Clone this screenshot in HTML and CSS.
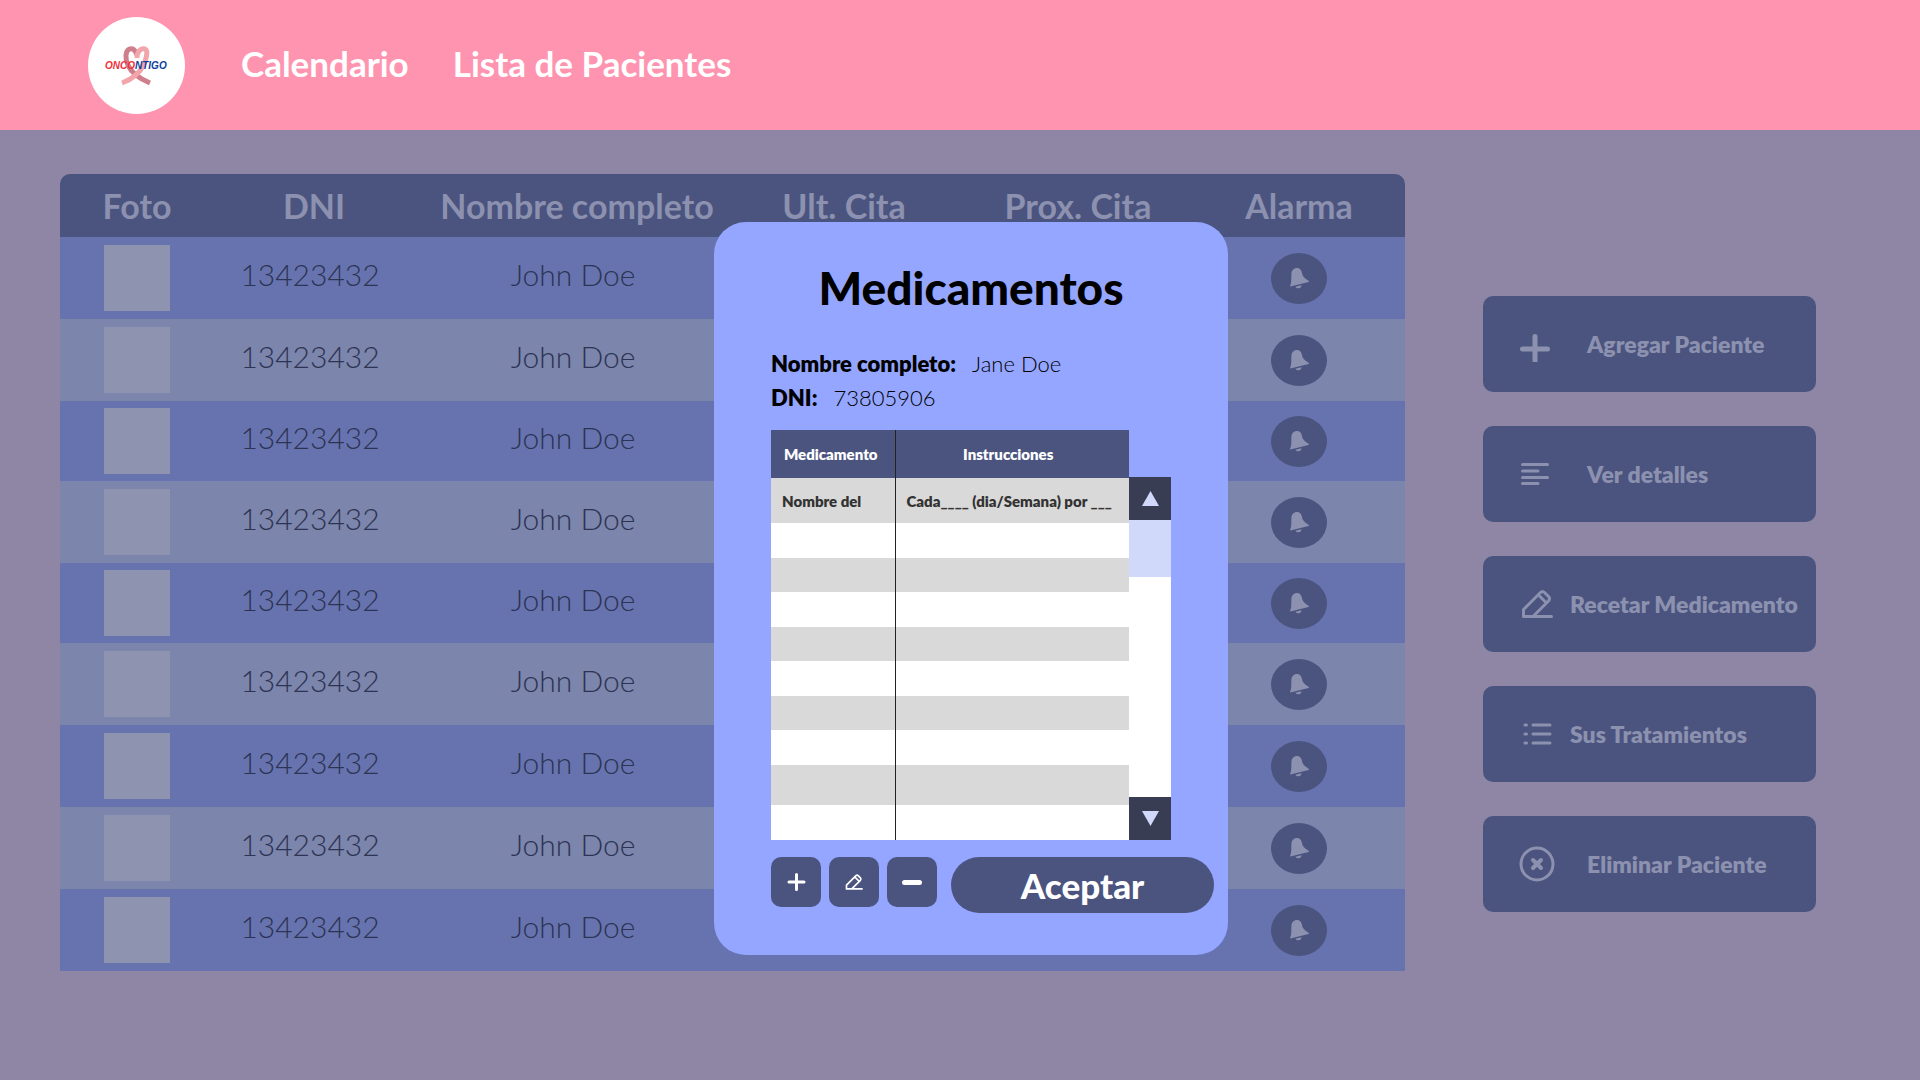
FILE: index.html
```html
<!DOCTYPE html>
<html lang="es">
<head>
<meta charset="utf-8">
<meta name="viewport" content="width=device-width, initial-scale=1">
<title>Oncontigo - Lista de Pacientes</title>
<link rel="stylesheet" href="styles.css">
</head>
<body>
<svg class="sprite" aria-hidden="true">
  <symbol id="bell" viewBox="0 0 56 51">
    <path fill="currentColor" d="M19 33C21 29 20 24 20.5 20C21 16.5 23.5 15 26 15C29 15 30.5 17 31 20C31.5 24 35 26 38 28L37.6 29L19.4 33.5Z"/>
    <path fill="currentColor" d="M24.5 33.7L30.5 32.3C30.5 34 29 35.3 27.5 35.3C26 35.3 25 34.8 24.5 33.7Z"/>
  </symbol>
  <symbol id="pencil" viewBox="0 0 36 36">
    <path fill="none" stroke="currentColor" stroke-width="3" stroke-linecap="round" stroke-linejoin="round" d="M4.500 30.500H32.500M4.500 30.500V23.500L21.500 6.500Q23.500 4.500 25.500 6.500L29.500 10.500Q31.500 12.500 29.500 15L14.500 30M19.500 9L27 16.500"/>
  </symbol>
</svg>

<header class="topbar">
  <a class="logo" href="#" aria-label="Oncontigo">
    <svg viewBox="0 0 97 97" width="97" height="97">
      <g fill="none" stroke-width="5">
        <path stroke="#cf7f8b" d="M49 38C47 32 44 31 41.500 32C37 34 37 42 40 48C43 55 50 61 62 66"/>
        <path stroke="#f2a5ab" d="M49 41C49 34 53 31 57 32C60 33 59 40 56 47C52 56 45 62 34 66"/>
      </g>
      <text class="logo-text" x="17" y="52"><tspan fill="#f0323a">ONCO</tspan><tspan fill="#0d3f9c">NTIGO</tspan></text>
    </svg>
  </a>
  <nav class="nav">
    <a href="#">Calendario</a>
    <a href="#">Lista de Pacientes</a>
  </nav>
</header>

<main class="page">
  <table class="patients">
    <colgroup><col class="c-photo"><col class="c-dni"><col class="c-name"><col class="c-last"><col class="c-next"><col class="c-alarm"></colgroup>
    <thead>
      <tr><th>Foto</th><th>DNI</th><th>Nombre completo</th><th>Ult. Cita</th><th>Prox. Cita</th><th>Alarma</th></tr>
    </thead>
    <tbody>
      <tr><td><span class="photo"></span></td><td class="txt">13423432</td><td class="txt">John Doe</td><td></td><td></td><td><button class="alarm" aria-label="Alarma"><svg><use href="#bell"/></svg></button></td></tr>
      <tr><td><span class="photo"></span></td><td class="txt">13423432</td><td class="txt">John Doe</td><td></td><td></td><td><button class="alarm" aria-label="Alarma"><svg><use href="#bell"/></svg></button></td></tr>
      <tr class="short"><td><span class="photo"></span></td><td class="txt">13423432</td><td class="txt">John Doe</td><td></td><td></td><td><button class="alarm" aria-label="Alarma"><svg><use href="#bell"/></svg></button></td></tr>
      <tr><td><span class="photo"></span></td><td class="txt">13423432</td><td class="txt">John Doe</td><td></td><td></td><td><button class="alarm" aria-label="Alarma"><svg><use href="#bell"/></svg></button></td></tr>
      <tr class="short"><td><span class="photo"></span></td><td class="txt">13423432</td><td class="txt">John Doe</td><td></td><td></td><td><button class="alarm" aria-label="Alarma"><svg><use href="#bell"/></svg></button></td></tr>
      <tr><td><span class="photo"></span></td><td class="txt">13423432</td><td class="txt">John Doe</td><td></td><td></td><td><button class="alarm" aria-label="Alarma"><svg><use href="#bell"/></svg></button></td></tr>
      <tr><td><span class="photo"></span></td><td class="txt">13423432</td><td class="txt">John Doe</td><td></td><td></td><td><button class="alarm" aria-label="Alarma"><svg><use href="#bell"/></svg></button></td></tr>
      <tr><td><span class="photo"></span></td><td class="txt">13423432</td><td class="txt">John Doe</td><td></td><td></td><td><button class="alarm" aria-label="Alarma"><svg><use href="#bell"/></svg></button></td></tr>
      <tr><td><span class="photo"></span></td><td class="txt">13423432</td><td class="txt">John Doe</td><td></td><td></td><td><button class="alarm" aria-label="Alarma"><svg><use href="#bell"/></svg></button></td></tr>
    </tbody>
  </table>

  <aside class="actions">
    <button class="action wide">
      <svg viewBox="0 0 36 36" fill="none" stroke="currentColor" stroke-width="5" stroke-linecap="round"><path d="M3.500 23H28.500M16 10.500V35.500"/></svg>
      Agregar Paciente
    </button>
    <button class="action wide">
      <svg viewBox="0 0 36 36" fill="none" stroke="currentColor" stroke-width="3" stroke-linecap="round"><path d="M3.500 8.500H28.500M3.500 15H19M3.500 21.500H28.500M3.500 27.500H19"/></svg>
      Ver detalles
    </button>
    <button class="action">
      <svg><use href="#pencil"/></svg>
      Recetar Medicamento
    </button>
    <button class="action">
      <svg viewBox="0 0 36 36" fill="none" stroke="currentColor" stroke-width="3" stroke-linecap="round"><path d="M6 9H7.500M14 9H31M6 18H7.500M14 18H31M6 27H7.500M14 27H31"/></svg>
      Sus Tratamientos
    </button>
    <button class="action wide">
      <svg viewBox="0 0 36 36" fill="none" stroke="currentColor" stroke-width="3" stroke-linecap="round"><circle cx="18" cy="18" r="16"/><path stroke-width="4" d="M14 14L22 22M22 14L14 22"/></svg>
      Eliminar Paciente
    </button>
  </aside>

  <section class="modal" role="dialog" aria-labelledby="modal-title">
    <h1 id="modal-title">Medicamentos</h1>
    <dl class="info">
      <div><dt>Nombre completo:</dt><dd>Jane Doe</dd></div>
      <div><dt>DNI:</dt><dd>73805906</dd></div>
    </dl>
    <div class="meds-box">
      <table class="meds">
        <thead><tr><th>Medicamento</th><th>Instrucciones</th></tr></thead>
        <tbody>
          <tr class="first"><td>Nombre del</td><td>Cada____ (dia/Semana) por ___</td></tr>
          <tr><td></td><td></td></tr>
          <tr><td></td><td></td></tr>
          <tr><td></td><td></td></tr>
          <tr><td></td><td></td></tr>
          <tr><td></td><td></td></tr>
          <tr><td></td><td></td></tr>
          <tr><td></td><td></td></tr>
          <tr class="tall"><td></td><td></td></tr>
          <tr><td></td><td></td></tr>
        </tbody>
      </table>
      <div class="scroll">
        <button aria-label="Subir"><svg viewBox="0 0 17 15"><path fill="currentColor" d="M8.500 0L17 15H0Z"/></svg></button>
        <div class="track"><div class="thumb"></div></div>
        <button aria-label="Bajar"><svg viewBox="0 0 17 15"><path fill="currentColor" d="M8.500 15L17 0H0Z"/></svg></button>
      </div>
    </div>
    <div class="tools">
      <button class="tool" aria-label="Agregar"><svg viewBox="0 0 24 24" stroke="#fff" stroke-width="3" stroke-linecap="round"><path d="M5 12H20M12.500 4.500V19.500"/></svg></button>
      <button class="tool" aria-label="Editar"><svg class="small"><use href="#pencil"/></svg></button>
      <button class="tool" aria-label="Quitar"><svg viewBox="0 0 24 24" stroke="#fff" stroke-width="5" stroke-linecap="round"><path d="M4.500 12.500H19.500"/></svg></button>
      <button class="accept">Aceptar</button>
    </div>
  </section>
</main>
</body>
</html>
```
FILE: styles.css
```css
:root {
  --navy: #4b547f;
  --muted: #8c91af;
  --row: #6773af;
  --row-alt: #7c85ab;
  --periwinkle: #94a6ff;
}

* { box-sizing: border-box; }

body {
  margin: 0;
  min-height: 100vh;
  background: #8e86a4;
  font-family: Lato, "Open Sans", sans-serif;
}

button {
  margin: 0;
  padding: 0;
  border: 0;
  font: inherit;
  cursor: pointer;
}

svg { display: block; }
.sprite { display: none; }

/* Top bar */
.topbar {
  display: flex;
  align-items: center;
  gap: 56px;
  height: 130px;
  padding: 0 88px;
  background: #ff94b0;
}

.logo {
  width: 97px;
  height: 97px;
  border-radius: 50%;
  background: #fff;
}

.logo-text {
  font: italic 700 10px "Liberation Sans Narrow", "Liberation Sans", sans-serif;
}

.nav {
  display: flex;
  gap: 44px;
  padding-bottom: 4px;
  font-size: 35px;
  font-weight: 700;
  line-height: 42px;
}

.nav a {
  color: #fff;
  text-decoration: none;
}

/* Patient list */
.page {
  position: relative;
  display: flex;
  align-items: flex-start;
  gap: 78px;
  padding: 44px 104px 44px 60px;
}

.patients {
  flex: 1;
  table-layout: fixed;
  border-collapse: collapse;
  border-radius: 10px 10px 0 0;
  overflow: hidden;
}

.c-photo { width: 154px; }
.c-dni { width: 200px; }
.c-name { width: 326px; }
.c-last { width: 208px; }
.c-next { width: 260px; }
.c-alarm { width: 197px; }

.patients th,
.patients td {
  padding: 0;
  text-align: center;
  vertical-align: middle;
}

.patients th {
  height: 63px;
  background: var(--navy);
  color: var(--muted);
  font-size: 34px;
  font-weight: 700;
  line-height: 40px;
  white-space: nowrap;
}

.patients tbody tr { height: 82px; background: var(--row); }
.patients tbody tr:nth-child(even) { background: var(--row-alt); }
.patients tbody tr.short { height: 80px; }

.patients .txt {
  padding: 0 8px 8px 0;
  color: #2c3353;
  font-size: 30px;
  font-weight: 300;
  line-height: 36px;
}

.patients th:last-child,
.patients td:last-child { padding-right: 15px; }

.photo {
  display: block;
  width: 66px;
  height: 66px;
  margin: 0 auto;
  background: #8e93af;
}

.alarm {
  display: block;
  width: 56px;
  height: 51px;
  margin: 0 auto;
  border-radius: 50%;
  background: var(--navy);
  color: var(--muted);
}

.alarm svg { width: 56px; height: 51px; }

/* Side actions */
.actions {
  display: flex;
  flex-direction: column;
  gap: 34px;
  width: 333px;
  padding-top: 122px;
}

.action {
  display: flex;
  align-items: center;
  gap: 15px;
  height: 96px;
  padding-left: 36px;
  border-radius: 10px;
  background: var(--navy);
  color: var(--muted);
  font-size: 23px;
  font-weight: 800;
  line-height: 28px;
  white-space: nowrap;
}

.action.wide { gap: 32px; }
.action svg { flex: none; width: 36px; height: 36px; }

/* Medication dialog */
.modal {
  position: absolute;
  top: 92px;
  left: calc(50% - 246px);
  width: 514px;
  padding: 38px 14px 42px 57px;
  border-radius: 32px;
  background: var(--periwinkle);
}

.modal h1 {
  margin: 0 43px 31px 0;
  color: #000;
  font-size: 46px;
  font-weight: 900;
  line-height: 56px;
  text-align: center;
}

.info {
  margin: 0 0 15px;
  color: #000;
  font-size: 22px;
  line-height: 34px;
}

.info div { display: flex; gap: 16px; }
.info dt { font-weight: 800; }
.info dd { margin: 0; font-weight: 300; }

.meds-box {
  display: flex;
  align-items: flex-start;
  width: 400px;
  margin-bottom: 17px;
}

.meds {
  flex: 1;
  table-layout: fixed;
  border-collapse: collapse;
  font-size: 15px;
  line-height: 20px;
}

.meds th,
.meds td {
  padding: 0;
  font-weight: 800;
  white-space: nowrap;
}

.meds th {
  height: 48px;
  padding-right: 8px;
  background: var(--navy);
  color: #fff;
}

.meds th:first-child { width: 124px; padding-right: 4px; }
.meds th:first-child,
.meds td:first-child { border-right: 1px solid #222; }

.meds tr { height: 35px; background: #fff; }
.meds tbody tr:nth-child(odd) { height: 34px; background: #d9d9d9; }
.meds tbody tr.first { height: 45px; }
.meds tbody tr.tall { height: 40px; }
.meds td { padding-left: 11px; color: #333; }

.scroll {
  display: flex;
  flex-direction: column;
  align-self: stretch;
  width: 42px;
  padding-top: 47px;
}

.scroll button {
  display: flex;
  align-items: center;
  justify-content: center;
  flex: none;
  height: 43px;
  background: #393d54;
  color: #d0d9fa;
}

.scroll svg { width: 17px; height: 15px; }
.track { flex: 1; background: #fff; }
.thumb { height: 57px; background: #d0d9fa; }

.tools { display: flex; gap: 8px; }

.tool {
  display: flex;
  align-items: center;
  justify-content: center;
  width: 50px;
  height: 50px;
  border-radius: 10px;
  background: var(--navy);
  color: #fff;
}

.tool svg { width: 24px; height: 24px; }
.tool svg.small { width: 20px; height: 20px; }

.accept {
  flex: 1;
  height: 56px;
  margin-left: 6px;
  border-radius: 28px;
  background: var(--navy);
  color: #fff;
  font-size: 35px;
  font-weight: 900;
  line-height: 42px;
}
```
